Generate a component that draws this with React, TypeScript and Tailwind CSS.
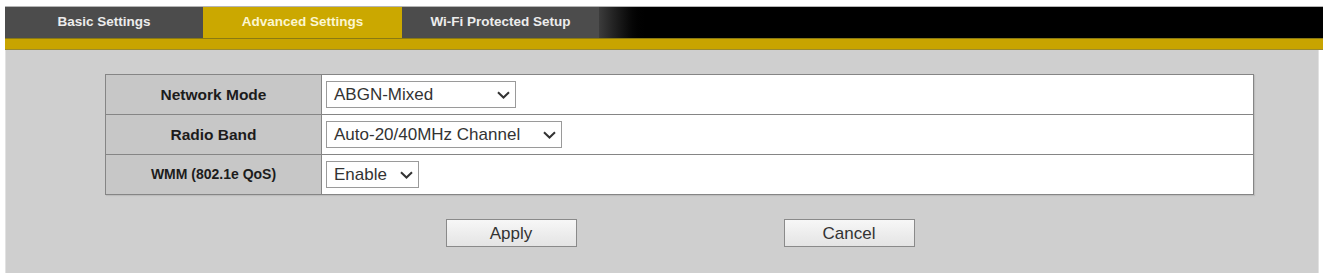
function Chevron() {
  return (
    <svg width="13" height="8" viewBox="0 0 13 8" className="shrink-0">
      <path d="M1 1.2 L6.5 6.5 L12 1.2" fill="none" stroke="#333" strokeWidth="2" />
    </svg>
  )
}

function FakeSelect({ value, width }: { value: string; width: string }) {
  return (
    <div
      className={`${width} h-[27px] flex items-center justify-between pl-[7px] pr-[5px] bg-white border border-[#9a9a9a] text-[17px] text-[#333] leading-none`}
    >
      <span>{value}</span>
      <Chevron />
    </div>
  )
}

const rows = [
  { label: 'Network Mode', value: 'ABGN-Mixed', width: 'w-[190px]', small: false },
  { label: 'Radio Band', value: 'Auto-20/40MHz Channel', width: 'w-[236px]', small: false },
  { label: 'WMM (802.1e QoS)', value: 'Enable', width: 'w-[93px]', small: true },
]

export default function App() {
  return (
    <div
      className="w-[1323px] h-[273px] bg-white pt-[6px] pl-[5px] flex flex-col overflow-hidden"
      style={{ fontFamily: '"Liberation Sans", Arial, sans-serif' }}
    >
      <div className="border-t border-[#b5b5b5]" />
      {/* tab strip */}
      <div className="flex h-[31px] bg-[#c9a600]">
        <div className="w-[198px] bg-[#4c4c4c] text-[#ececec] font-bold text-[13.5px] flex justify-center pt-[5px]">
          Basic Settings
        </div>
        <div className="w-[199px] bg-[#cba800] text-[#fbf6d0] font-bold text-[13.5px] flex justify-center pt-[5px]">
          Advanced Settings
        </div>
        <div className="w-[197px] bg-[#4c4c4c] text-[#ececec] font-bold text-[13.5px] flex justify-center pt-[5px]">
          Wi-Fi Protected Setup
        </div>
        <div className="flex-1 bg-gradient-to-r from-[#3c3c3c] via-black via-[7%] to-black" />
      </div>
      <div className="h-[12px] bg-[#c8a400] border-t border-[#8a7a12] border-b border-b-[#9a8a30]" />
      {/* content */}
      <div className="flex-1 bg-[#cfcfcf] border-l border-[#e2e2e2] mr-[4px] border-r pl-[99px] pt-[24px]">
        <table className="w-[1149px] border-collapse border border-[#888] shadow-[1px_1px_1px_#bdbdbd]">
          <tbody>
            {rows.map((r) => (
              <tr key={r.label} className="h-[40px]">
                <td
                  className={`w-[216px] bg-[#c7c7c7] border border-[#858585] text-center font-bold text-[#1c1c1c] ${r.small ? 'text-[14px]' : 'text-[15.5px]'}`}
                >
                  {r.label}
                </td>
                <td className="bg-white border border-[#858585] pl-[4px]">
                  <FakeSelect value={r.value} width={r.width} />
                </td>
              </tr>
            ))}
          </tbody>
        </table>
        <div className="w-[1149px] flex justify-center gap-[207px] mt-[24px] pl-[1px]">
          {['Apply', 'Cancel'].map((b) => (
            <button
              key={b}
              className="w-[131px] h-[28px] border border-[#8a8a8a] bg-gradient-to-b from-[#f7f7f7] to-[#e4e4e4] text-[17px] text-[#333] leading-none"
            >
              {b}
            </button>
          ))}
        </div>
      </div>
    </div>
  )
}
